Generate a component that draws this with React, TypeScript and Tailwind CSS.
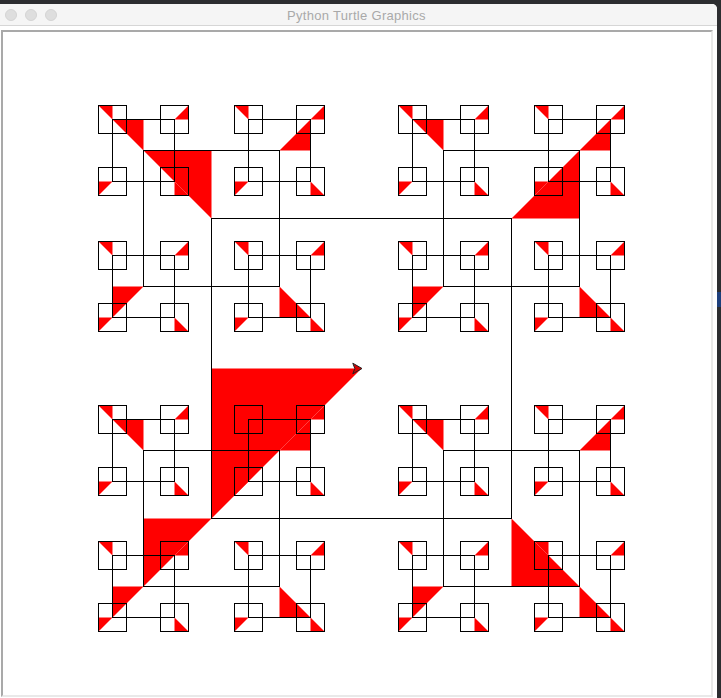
type Corner = "tl" | "tr" | "bl" | "br";

type Square = { cx: number; cy: number; h: number; corner: Corner };

const HALVES = [150, 68, 31, 14];

function collectSquares(cx: number, cy: number, level: number, corner: Corner, out: Square[]) {
  const h = HALVES[level];
  out.push({ cx, cy, h, corner });
  if (level === HALVES.length - 1) return;
  collectSquares(cx - h, cy - h, level + 1, "tl", out);
  collectSquares(cx + h, cy - h, level + 1, "tr", out);
  collectSquares(cx - h, cy + h, level + 1, "bl", out);
  collectSquares(cx + h, cy + h, level + 1, "br", out);
}

function trianglePoints({ cx, cy, h, corner }: Square) {
  if (corner === "tl") return `${cx - h},${cy - h} ${cx},${cy - h} ${cx},${cy}`;
  if (corner === "tr") return `${cx + h},${cy - h} ${cx + h},${cy} ${cx},${cy}`;
  if (corner === "bl") return `${cx - h},${cy} ${cx},${cy} ${cx - h},${cy + h}`;
  return `${cx},${cy} ${cx},${cy + h} ${cx + h},${cy + h}`;
}

function TurtleCanvas() {
  const squares: Square[] = [];
  collectSquares(361.5, 368.5, 0, "bl", squares);

  return (
    <svg width={708} height={663} viewBox="3 32 708 663" className="block">
      {squares.map((s, i) => (
        <polygon key={i} points={trianglePoints(s)} fill="#ff0000" />
      ))}
      {squares.map((s, i) => (
        <rect key={i} x={s.cx - s.h} y={s.cy - s.h} width={s.h * 2} height={s.h * 2} fill="none" stroke="#000" strokeWidth={1} />
      ))}
      <polygon points="362,368.5 352.8,363.2 354.8,368.5 352.8,373.8" fill="#d40000" stroke="#222" strokeWidth={1} />
    </svg>
  );
}

export default function App() {
  return (
    <div className="flex h-[698px] w-[721px] flex-col overflow-hidden bg-[#2c2d30] font-['Liberation_Sans',Arial,sans-serif]">
      <div className="h-1 shrink-0" />
      <div className="flex min-h-0 flex-1">
        <div className="flex w-[717px] flex-col overflow-hidden rounded-tr-[5px] bg-white">
          <div className="grid h-[22px] shrink-0 grid-cols-[1fr_auto_1fr] items-center border-b border-[#d6d6d6] bg-[#f5f5f5] pl-[5px] pr-[9px] pt-px">
            <div className="flex gap-2">
              <span className="h-3 w-3 rounded-full border border-[#d4d4d4] bg-[#dedede]" />
              <span className="h-3 w-3 rounded-full border border-[#d4d4d4] bg-[#dedede]" />
              <span className="h-3 w-3 rounded-full border border-[#d4d4d4] bg-[#dedede]" />
            </div>
            <span className="text-[13px] leading-none tracking-[0.3px] text-[#a9a9a9]">Python Turtle Graphics</span>
            <div />
          </div>
          <div className="flex-1 pb-px pl-px pr-1 pt-1">
            <div className="border-2 border-b-[#e9e9e9] border-l-[#a9a9a9] border-r-[#e9e9e9] border-t-[#a9a9a9]">
              <TurtleCanvas />
            </div>
          </div>
        </div>
        <div className="w-1 shrink-0">
          <div className="mt-[288px] h-[15px] bg-[#1d3f7c]" />
        </div>
      </div>
    </div>
  );
}
